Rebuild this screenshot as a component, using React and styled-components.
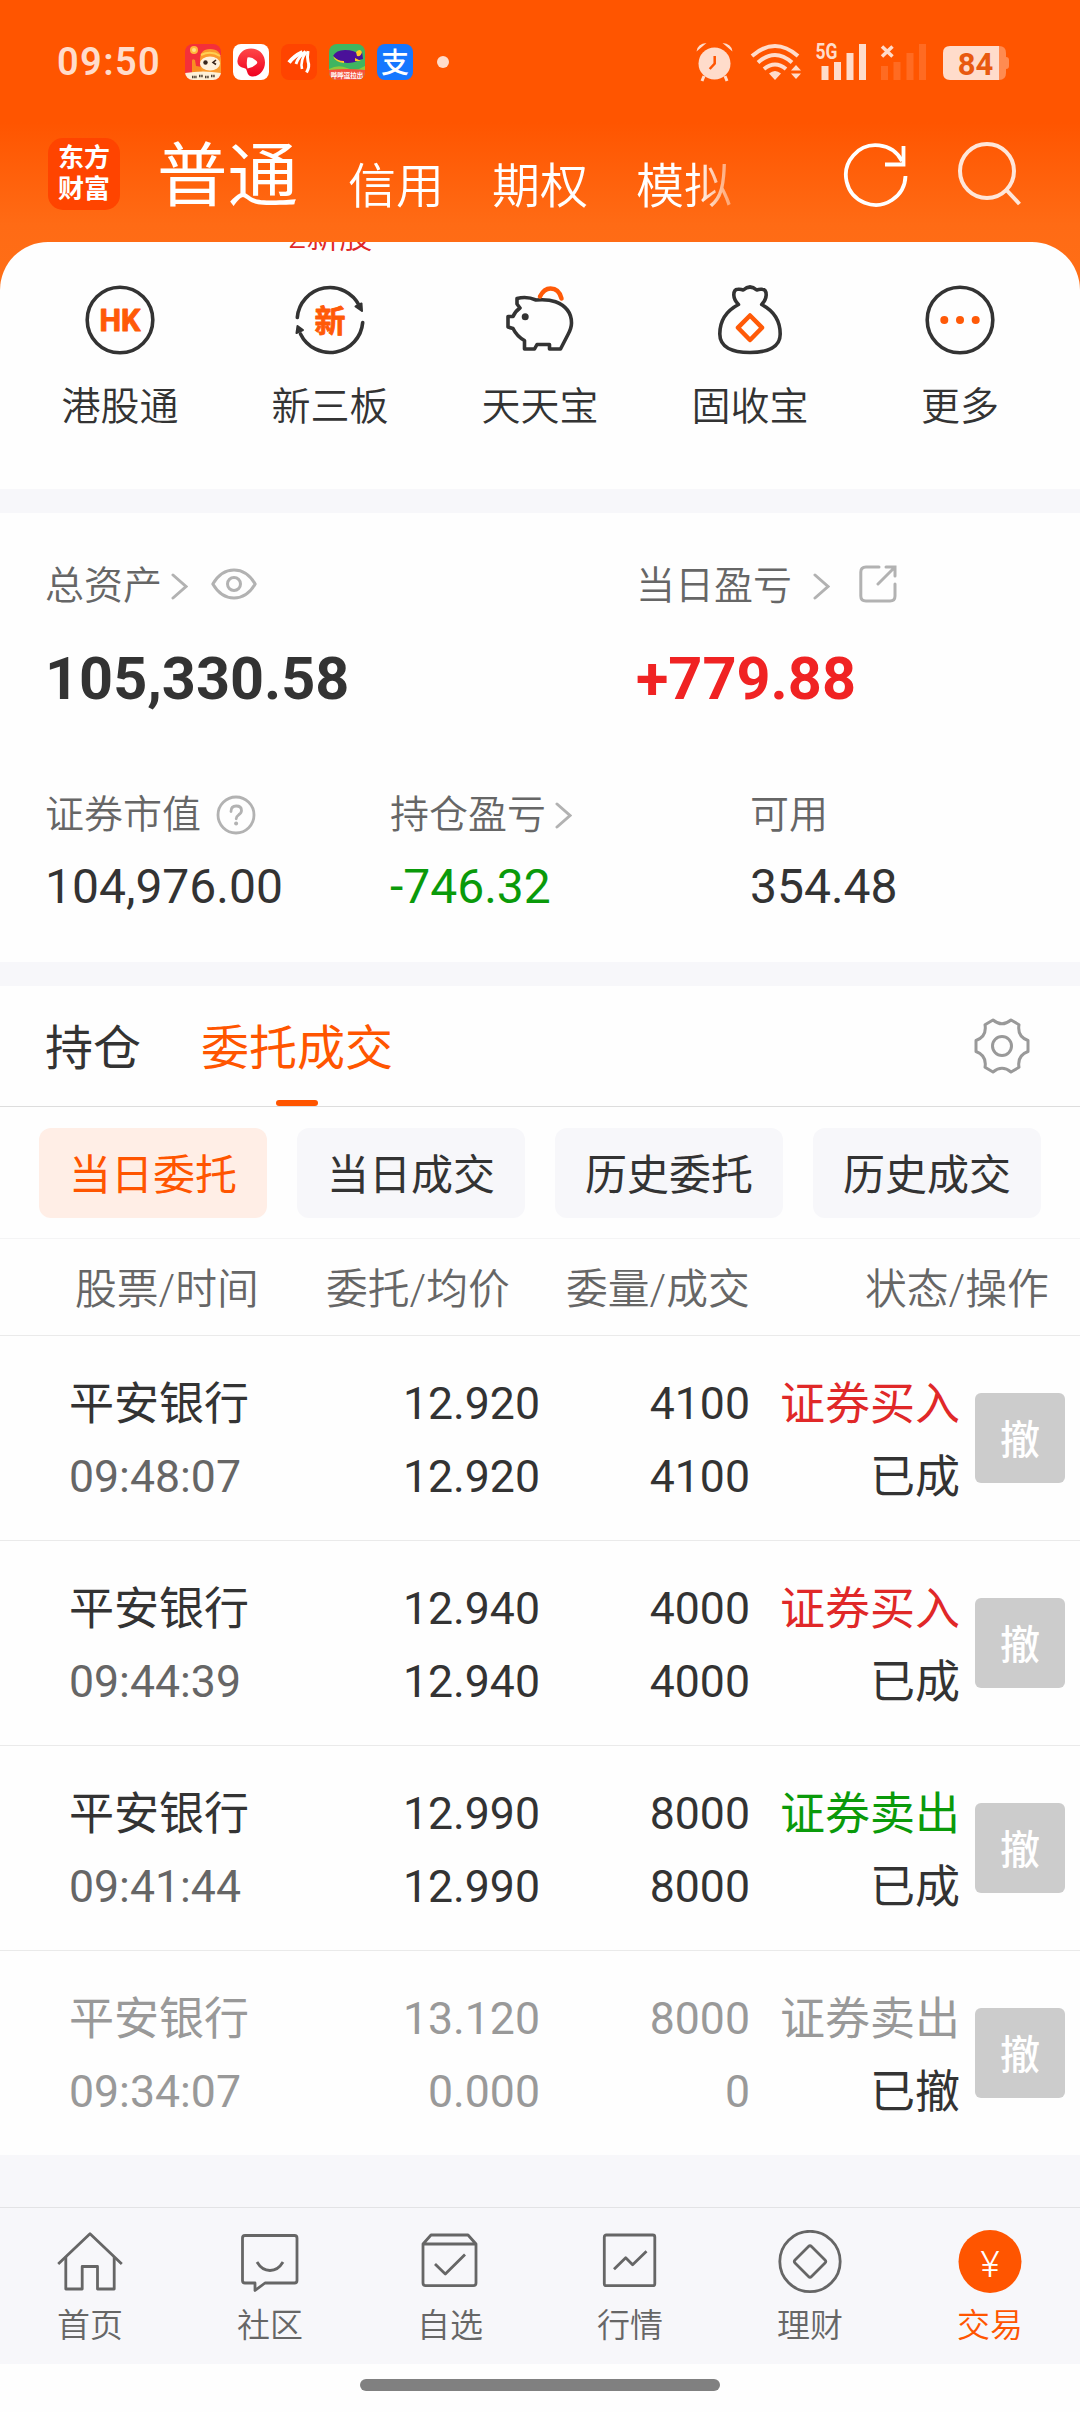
import React from 'react';
import styled, { createGlobalStyle } from 'styled-components';

const GlobalStyle = createGlobalStyle`
  * {
    box-sizing: border-box;
  }
  body {
    margin: 0;
    background: #fefefe;
    font-family: Roboto, 'Noto Sans CJK SC', sans-serif;
    color: #333;
  }
  svg {
    display: block;
    flex: none;
  }
`;

const Page = styled.div`
  width: 1080px;
  height: 2412px;
  overflow: hidden;
  display: flex;
  flex-direction: column;
`;

const Top = styled.div`
  background: linear-gradient(#ff5500 0, #ff5500 122px, #ff6b15 225px, #ff6f16 300px);
`;

const StatusBar = styled.div`
  height: 124px;
  display: flex;
  align-items: center;
  padding-left: 57px;
`;

const Clock = styled.div`
  width: 128px;
  font-size: 38px;
  font-weight: 600;
  letter-spacing: 1.4px;
  line-height: 40px;
  color: #ffdccb;
`;

const Notifications = styled.div`
  display: flex;
  gap: 12px;
`;

const MoreDot = styled.div`
  width: 12px;
  height: 12px;
  border-radius: 50%;
  background: #ffdccb;
  margin-left: 24px;
`;

const SystemIcons = styled.div`
  display: flex;
  align-items: center;
  margin-left: auto;
  margin-right: 69px;
`;

const Header = styled.div`
  height: 118px;
  display: flex;
  padding-left: 48px;
`;

const Logo = styled.div`
  width: 72px;
  height: 72px;
  margin-top: 14px;
  padding-top: 5px;
  border-radius: 15px;
  background: #ff4400;
  color: #fff;
  font-size: 26px;
  font-weight: 700;
  line-height: 31px;
  text-align: center;
`;

const AccountTabs = styled.div`
  display: flex;
  width: 640px;
  margin-left: 37px;
  color: #fff;
  white-space: nowrap;
  mask-image: linear-gradient(to right, #000 538px, transparent 598px);
`;

const AccountTab = styled.div`
  font-size: ${(p) => (p.$active ? '70.5px' : '48px')};
  line-height: 72px;
  margin-top: ${(p) => (p.$active ? '17px' : '27px')};
  margin-right: ${(p) => (p.$active ? '50px' : '48px')};
  font-weight: ${(p) => (p.$active ? 400 : 350)};
`;

const HeaderActions = styled.div`
  display: flex;
  gap: 48px;
  margin-top: 14px;
  margin-left: 46px;
`;

const Shortcuts = styled.div`
  height: 247px;
  display: flex;
  padding: 0 15px;
  background: #fefefe;
  border-radius: 48px 48px 0 0;
  overflow: hidden;
`;

const Shortcut = styled.div`
  position: relative;
  width: 210px;
  padding-top: 42px;
  display: flex;
  flex-direction: column;
  align-items: center;
  font-size: 39px;
  font-weight: 350;
  line-height: 60px;
  gap: 21px;
`;

const Badge = styled.div`
  position: absolute;
  top: -25px;
  font-size: 33px;
  line-height: 40px;
  color: #e02828;
  white-space: nowrap;
`;

const Gap = styled.div`
  height: 24px;
  background: #f7f7fa;
`;

const Assets = styled.div`
  height: 449px;
  padding: 43px 0 0 45px;
`;

const AssetGrid = styled.div`
  display: grid;
  grid-template-columns: ${(p) => p.$columns};
  row-gap: 12px;
  margin-bottom: 70px;
`;

const AssetLabel = styled.div`
  height: 60px;
  display: flex;
  align-items: center;
  font-size: 39px;
  font-weight: 350;
  line-height: 60px;
  color: #666;
  gap: ${(p) => p.$gap || 0}px;
`;

const IconSlot = styled.span`
  margin-left: ${(p) => p.$left}px;
  margin-bottom: 4px;
`;

const Total = styled.div`
  font-size: 59.4px;
  font-weight: 700;
  line-height: 72px;
  margin-top: 15px;
  color: ${(p) => p.$color || '#333'};
`;

const Amount = styled.div`
  font-size: 48px;
  line-height: 60px;
  color: ${(p) => p.$color || '#333'};
`;

const Tabs = styled.div`
  height: 121px;
  display: flex;
  gap: 60px;
  padding: 0 50px 0 45px;
  border-bottom: 1px solid #ddd;
  align-items: center;
`;

const Tab = styled.div`
  position: relative;
  height: 120px;
  font-size: 48px;
  line-height: 125px;
  color: ${(p) => (p.$active ? '#ff5500' : '#333')};
  &::after {
    content: '';
    display: ${(p) => (p.$active ? 'block' : 'none')};
    position: absolute;
    bottom: 0;
    left: calc(50% - 21px);
    width: 42px;
    height: 6px;
    border-radius: 3px;
    background: #ff5500;
  }
`;

const Spacer = styled.div`
  flex: 1;
`;

const Chips = styled.div`
  height: 132px;
  display: flex;
  gap: 30px;
  padding: 21px 39px 0;
  border-bottom: 1px solid #f4f4f5;
`;

const Chip = styled.div`
  width: 228px;
  height: 90px;
  border-radius: 12px;
  font-size: 42px;
  line-height: 96px;
  text-align: center;
  background: ${(p) => (p.$active ? '#ffeee6' : '#f7f7fa')};
  color: ${(p) => (p.$active ? '#ff5500' : '#333')};
`;

const HeadRow = styled.div`
  height: 97px;
  display: grid;
  grid-template-columns: 251px 240px 299px 185px;
  padding-left: 75px;
  border-bottom: 1px solid #eaeaea;
  font-size: 41.8px;
  font-weight: 350;
  line-height: 102px;
  color: #666;
  white-space: nowrap;
`;

const OrderRow = styled.div`
  height: 205px;
  display: grid;
  grid-template-columns: 231px 240px 210px 210px 90px;
  padding: 32px 0 0 69px;
  border-bottom: 1px solid #eaeaea;
  font-size: 44.6px;
  line-height: 73px;
  color: ${(p) => (p.$dim ? '#999' : '#333')};
  &:last-child {
    height: 204px;
    border-bottom: none;
  }
`;

const Cell = styled.div`
  text-align: ${(p) => (p.$left ? 'left' : 'right')};
`;

const Name = styled.div`
  height: 73px;
  line-height: 74px;
  font-size: 45px;
`;

const Time = styled.div`
  color: ${(p) => (p.$dim ? '#999' : '#666')};
`;

const Side = styled(Name)`
  color: ${(p) => p.$color};
`;

const Status = styled(Name)`
  color: #333;
`;

const CancelButton = styled.button`
  width: 90px;
  height: 90px;
  margin: 25px 0 0 15px;
  padding: 5px 0 0;
  border: none;
  border-radius: 6px;
  background: #ccc;
  color: #fff;
  font: 500 40px/85px Roboto, 'Noto Sans CJK SC', sans-serif;
`;

const Filler = styled.div`
  height: 52px;
  background: #f7f7fa;
`;

const TabBar = styled.div`
  height: 157px;
  display: flex;
  background: #f7f7fa;
  border-top: 1px solid #e3e3e5;
`;

const TabBarItem = styled.div`
  width: 180px;
  padding-top: 22px;
  display: flex;
  flex-direction: column;
  align-items: center;
  gap: 2px;
  font-size: 33px;
  font-weight: 350;
  line-height: 60px;
  color: ${(p) => (p.$active ? '#ff5500' : '#666')};
`;

const HomeIndicator = styled.div`
  width: 360px;
  height: 12px;
  margin: 15px auto 0;
  border-radius: 6px;
  background: #808080;
`;

const SvgText = styled.text`
  font-family: Roboto, 'Noto Sans CJK SC', sans-serif;
  font-weight: ${(p) => p.$weight || 700};
  text-anchor: middle;
`;

/* status bar */

const MonkeyApp = () => (
  <svg width="36" height="36" viewBox="0 0 36 36">
    <clipPath id="monkey"><rect width="36" height="36" rx="8" /></clipPath>
    <g clipPath="url(#monkey)">
      <rect width="36" height="36" fill="#f4303a" />
      <circle cx="9" cy="6" r="4" fill="#ffb83c" />
      <circle cx="9" cy="6" r="2" fill="#ffe08a" />
      <path d="M7 30V17q0-3 3-1l1 6 6 1v8z" fill="#f98e22" />
      <path d="M15 16q0-11 10-11 11 0 11 11v14H18q-3-6-3-14z" fill="#fb9a2c" />
      <path d="M16 11q10-5 19 1" fill="none" stroke="#ffcf52" strokeWidth="2" />
      <ellipse cx="25" cy="19.500" rx="10" ry="7" fill="#fff0dc" />
      <circle cx="20.500" cy="18.500" r="2.200" fill="#39251d" />
      <path d="M31 16l-3 2.500 3 2" fill="none" stroke="#39251d" strokeWidth="1.600" />
      <path d="M0 29q18-3 36 0v7H0z" fill="#fdf1d8" />
      <path d="M7 33h5M14 32h4M20 33h4M26 32h4" stroke="#4d4033" strokeWidth="2.500" strokeDasharray="1.500 .7" />
    </g>
  </svg>
);

const VideoApp = () => (
  <svg width="36" height="36" viewBox="0 0 36 36">
    <defs>
      <linearGradient id="video" x1="0" y1="0" x2="0" y2="1">
        <stop offset="0" stopColor="#ff4848" />
        <stop offset="1" stopColor="#ef0020" />
      </linearGradient>
    </defs>
    <rect width="36" height="36" rx="8" fill="#fff" />
    <path d="M18 4.500c8 0 14 6 14 14 0 8-6 14-12 14-3 0-5-1-6-5-1-4-2-3-5-4-3-1-5-4-4.500-7C5.500 9 11 4.500 18 4.500z" fill="url(#video)" />
    <path d="M14.500 13.500q4-1 9 3.500 1.500 1.500 0 3-4 4-9 4.500-1.500-5 0-11z" fill="#fff" />
  </svg>
);

const WingIcon = () => (
  <svg width="36" height="36" viewBox="0 0 36 36">
    <rect width="36" height="36" rx="8" fill="#ff4400" />
    <g fill="none" stroke="#fff" strokeLinejoin="round">
      <path d="M8 18.500Q13 12 21.500 8" strokeWidth="4" />
      <path d="M15 20q2-7 9.500-12.500" strokeWidth="2.800" />
      <path d="M21 25q-2-9 4.500-17" strokeWidth="2.600" />
      <path d="M25.500 28.500q3.500-6 1.500-11-1-4 0-10.500" strokeWidth="3" />
    </g>
  </svg>
);

const FishApp = () => (
  <svg width="36" height="36" viewBox="0 0 36 36">
    <clipPath id="fish"><rect width="36" height="36" rx="8" /></clipPath>
    <g clipPath="url(#fish)">
      <rect width="36" height="36" fill="#3fb560" />
      <path d="M0 25q9-5 18-1t18-2v14H0z" fill="#8fc93c" />
      <path d="M4 12q3-6 12-6 10 0 14 5l3-4 1 8-4 1q-4 3-12 3-8-1-14-7z" fill="#4a1199" />
      <path d="M4 12q4 5 11 5v2Q6 18 4 12z" fill="#ffc928" />
      <path d="M27 8q4-4 6 0-1 5-5 4zM26 14l6 3-6 0z" fill="#ffc928" />
      <path d="M0 26q18-2 36 0v10H0z" fill="#f4523d" />
      <SvgText x="18" y="33.500" fontSize="6.500" fill="#fff">哔哔逗拉出</SvgText>
    </g>
  </svg>
);

const PayApp = () => (
  <svg width="36" height="36" viewBox="0 0 36 36">
    <rect width="36" height="36" rx="8" fill="#1677ff" />
    <SvgText x="18" y="28.500" fontSize="28" fill="#fff" $weight={500}>支</SvgText>
  </svg>
);

const StatusGlyphs = () => (
  <svg width="315" height="60" viewBox="696 32 315 60" fill="#ffdccb">
    {/* alarm */}
    <circle cx="714.500" cy="63.500" r="16" />
    <path d="M696.500 51.500q1-8 10-8.500zM732.500 51.500q-1-8-10-8.500z" />
    <path d="M704 76l-2 5M725 76l2 5" stroke="#ffdccb" strokeWidth="3" />
    <path d="M714.700 56v7.500l-5 5.500" fill="none" stroke="#ff5500" strokeWidth="2.500" />
    {/* wifi */}
    <g fill="none" stroke="#ffdccb" strokeWidth="4">
      <path d="M752 56q23-20 46 0" />
      <path d="M758 62.500q17-15 34 0" />
      <path d="M764 69q11-9 22 0" />
    </g>
    <path d="M775 80l-6-6.500q6-5 12 0zM796 65l5 5.500h-10zM796 79l5-5.500h-10z" />
    {/* sim 1 */}
    <SvgText x="826.500" y="59" fontSize="22" textLength="22" lengthAdjust="spacingAndGlyphs">5G</SvgText>
    <path d="M821.500 66h7v14h-7zM834 62h7v18h-7zM846.500 53h7v27h-7zM859 44h7v36h-7z" />
    {/* sim 2 */}
    <path d="M882 46.500l10.500 10M892.500 46.500l-10.500 10" stroke="#ffdccb" strokeWidth="3.500" />
    <path d="M881 66h7v14h-7zM893.500 62h7v18h-7zM906.500 53h7v27h-7zM919 44h7v36h-7z" opacity=".17" />
    {/* battery */}
    <path d="M999 46q7 0 7 7v4q3 0 3 3v6q0 3-3 3v4q0 7-7 7z" opacity=".4" />
    <path d="M950 46h49v34h-49q-7 0-7-7V53q0-7 7-7z" />
    <SvgText x="975.500" y="74.500" fontSize="31" fill="#e8590f">84</SvgText>
  </svg>
);

const RefreshIcon = () => (
  <svg width="66" height="72" viewBox="843 138 66 72" fill="none" stroke="#fff" strokeWidth="3.800">
    <path d="M905.500 176a29.800 29.800 0 1 1-3.500-15" />
    <path d="M903.500 146v18.500h-18.500" />
  </svg>
);

const SearchIcon = () => (
  <svg width="66" height="72" viewBox="957 138 66 72" fill="none" stroke="#ffe6d9" strokeWidth="4">
    <circle cx="987" cy="171" r="27" />
    <path d="M1005.500 189l14 15" />
  </svg>
);

/* shortcuts */

const ShortcutSvg = ({ children }) => (
  <svg width="72" height="72" viewBox="0 0 72 72" fill="none" stroke="#333" strokeWidth="3.600" strokeLinecap="round" strokeLinejoin="round">
    {children}
  </svg>
);

const HkIcon = () => (
  <ShortcutSvg>
    <circle cx="36" cy="36" r="32.800" />
    <SvgText x="36" y="46.500" fontSize="30.500" fill="#ff5a08" stroke="#ff5a08" strokeWidth="1">HK</SvgText>
  </ShortcutSvg>
);

const NewBoardIcon = () => (
  <ShortcutSvg>
    <path d="M3.300 33.500A32.800 32.800 0 0 1 65.500 22" />
    <path d="M68.700 38.500A32.800 32.800 0 0 1 6.500 50" />
    <path d="M61.500 22.500l6-3 .5 7.500zM3.500 42l5.500 4-6.500 3z" fill="#333" strokeWidth="2" />
    <SvgText x="36" y="47.500" fontSize="31" fill="#ff5a08" stroke="#ff5a08" strokeWidth=".8">新</SvgText>
  </ShortcutSvg>
);

const PiggyIcon = () => (
  <ShortcutSvg>
    <path d="M13 14.500q10-2.500 19 1.500 12-1 19.500 1.800Q67.500 24 67.500 39q0 5-3.500 11.500L56.500 65H45.500v-4.500H33L30.500 65H20.500v-8.500Q13 52.500 9 44.500L4 43V32.500h5q2-5 7-8.500l-3-4z" />
    <circle cx="21.200" cy="32.700" r="3.500" fill="#333" stroke="none" />
    <path d="M36 12.500Q40 4.500 46.500 4.500q8.500 0 11 10" stroke="#ff5a08" strokeWidth="4.500" />
  </ShortcutSvg>
);

const BagIcon = () => (
  <ShortcutSvg>
    <path d="M24.500 20.500Q20 16 19.800 11q0-5.500 4-5.700 3-.3 5.500.7Q36 0 42.700 6q2.500-1 5.500-.7 4 .2 4 5.700-.2 5-4.500 9.500C60 27 66.200 37 66.200 50 66.200 63 54 68.500 36 68.500S5.800 63 5.800 50C5.800 37 12 27 24.500 20.500z" />
    <path d="M36 31.500L48 43.700 36 56 24 43.700z" stroke="#ff5a08" strokeWidth="4.500" />
  </ShortcutSvg>
);

const MoreIcon = () => (
  <ShortcutSvg>
    <circle cx="36" cy="36" r="32.800" />
    <g fill="#ff5a08" stroke="none">
      <circle cx="20.300" cy="36" r="4" />
      <circle cx="36" cy="36" r="4" />
      <circle cx="51.700" cy="36" r="4" />
    </g>
  </ShortcutSvg>
);

/* assets */

const ChevronIcon = () => (
  <svg width="17" height="28" viewBox="0 0 17 28" fill="none" stroke="#b2b2b2" strokeWidth="3" strokeLinecap="round">
    <path d="M2 3l13 11.500L2 26" />
  </svg>
);

const EyeIcon = () => (
  <svg width="46" height="32" viewBox="0 0 46 32" fill="none" stroke="#b2b2b2" strokeWidth="3">
    <path d="M1.800 16Q10 2 23 2t21.200 14Q36 30 23 30T1.800 16z" strokeLinejoin="round" />
    <circle cx="23" cy="16" r="6.500" />
  </svg>
);

const ShareIcon = () => (
  <svg width="38" height="38" viewBox="0 0 38 38" fill="none" stroke="#b2b2b2" strokeWidth="3" strokeLinecap="round">
    <path d="M20 2H7Q1.800 2 1.800 7v24q0 5 5.200 5h24q5 0 5-5V19" />
    <path d="M27 2h9v9M36 2L19 19" />
  </svg>
);

const HelpIcon = () => (
  <svg width="40" height="40" viewBox="0 0 40 40" fill="none" stroke="#b2b2b2" strokeWidth="2.800">
    <circle cx="20" cy="20" r="18" />
    <path d="M15 16.500q0-5.500 5.200-5.500 5.300 0 5.300 4.500 0 2.500-2.800 4.300-2.500 1.700-2.500 4" strokeLinecap="round" />
    <circle cx="20.100" cy="28.500" r="2" fill="#b2b2b2" stroke="none" />
  </svg>
);

const GearIcon = () => (
  <svg width="56" height="56" viewBox="-28 -28 56 56" fill="none" stroke="#999" strokeWidth="3" strokeLinejoin="round">
    <path d="M-9-26Q0-18.500 9-26l8 4.700Q15-9.500 26-5.500V5.500Q15 9.500 17 21.300L9 26Q0 18.500-9 26l-8-4.700Q-15 9.500-26 5.500V-5.500Q-15-9.500-17-21.300z" />
    <circle r="9.500" />
  </svg>
);

/* tab bar */

const TabSvg = ({ children }) => (
  <svg width="72" height="64" viewBox="0 0 72 64" fill="none" stroke="#666" strokeWidth="2.800" strokeLinejoin="round">
    {children}
  </svg>
);

const HomeIcon = () => (
  <TabSvg>
    <path d="M4.200 34L36 3.800 67.800 34" />
    <path d="M11.800 27v32H28.200V36.500H43.500V59H60.200V27" />
  </TabSvg>
);

const CommunityIcon = () => (
  <TabSvg>
    <path d="M11 5.500H60.500q2.500 0 2.500 2.500V50.500q0 2.500-2.500 2.500H31L21 60.500V53H11q-2.500 0-2.500-2.500V8q0-2.500 2.500-2.500z" />
    <path d="M23 32q5 8.500 13 8.500T49 32" />
  </TabSvg>
);

const WatchlistIcon = () => (
  <TabSvg>
    <path d="M9 14L17 5H54L62 14V53q0 2.700-2.700 2.700H11.700Q9 55.700 9 53zM9 14H62" />
    <path d="M21 34L31.300 44 51 24.500" />
  </TabSvg>
);

const MarketIcon = () => (
  <TabSvg>
    <rect x="10.300" y="5" width="50.500" height="50.700" rx="2" />
    <path d="M20 39.300L31.700 27.800 38.600 34.700 52.500 21.300" />
  </TabSvg>
);

const WealthIcon = () => (
  <TabSvg>
    <circle cx="36" cy="31.500" r="30.200" />
    <path d="M34.500 16.500q1.500-1.500 3 0L51 30q1.500 1.500 0 3L37.500 46.500q-1.500 1.500-3 0L21 33q-1.500-1.500 0-3z" />
  </TabSvg>
);

const TradeIcon = () => (
  <TabSvg>
    <circle cx="36" cy="31.500" r="31.500" fill="#ff5500" stroke="none" />
    <SvgText x="36" y="47" fontSize="37" fill="#fff" stroke="none" $weight={350}>¥</SvgText>
  </TabSvg>
);

const shortcuts = [
  { label: '港股通', icon: <HkIcon /> },
  { label: '新三板', icon: <NewBoardIcon />, badge: '2新股' },
  { label: '天天宝', icon: <PiggyIcon /> },
  { label: '固收宝', icon: <BagIcon /> },
  { label: '更多', icon: <MoreIcon /> },
];

const orders = [
  { time: '09:48:07', price: '12.920', avg: '12.920', qty: '4100', done: '4100', side: '证券买入', color: '#e02828', status: '已成' },
  { time: '09:44:39', price: '12.940', avg: '12.940', qty: '4000', done: '4000', side: '证券买入', color: '#e02828', status: '已成' },
  { time: '09:41:44', price: '12.990', avg: '12.990', qty: '8000', done: '8000', side: '证券卖出', color: '#0a9a0a', status: '已成' },
  { time: '09:34:07', price: '13.120', avg: '0.000', qty: '8000', done: '0', side: '证券卖出', color: '#999', status: '已撤', dim: true },
];

const tabBar = [
  { label: '首页', icon: <HomeIcon /> },
  { label: '社区', icon: <CommunityIcon /> },
  { label: '自选', icon: <WatchlistIcon /> },
  { label: '行情', icon: <MarketIcon /> },
  { label: '理财', icon: <WealthIcon /> },
  { label: '交易', icon: <TradeIcon />, active: true },
];

const App = () => {
  return (
    <Page>
      <GlobalStyle />
      <Top>
        <StatusBar>
          <Clock>09:50</Clock>
          <Notifications>
            <MonkeyApp />
            <VideoApp />
            <WingIcon />
            <FishApp />
            <PayApp />
          </Notifications>
          <MoreDot />
          <SystemIcons>
            <StatusGlyphs />
          </SystemIcons>
        </StatusBar>
        <Header>
          <Logo>
            东方
            <br />
            财富
          </Logo>
          <AccountTabs>
            <AccountTab $active>普通</AccountTab>
            <AccountTab>信用</AccountTab>
            <AccountTab>期权</AccountTab>
            <AccountTab>模拟</AccountTab>
          </AccountTabs>
          <HeaderActions>
            <RefreshIcon />
            <SearchIcon />
          </HeaderActions>
        </Header>
        <Shortcuts>
          {shortcuts.map((s) => (
            <Shortcut key={s.label}>
              {s.badge && <Badge>{s.badge}</Badge>}
              {s.icon}
              <span>{s.label}</span>
            </Shortcut>
          ))}
        </Shortcuts>
      </Top>
      <Gap />
      <Assets>
        <AssetGrid $columns="591px 1fr">
          <AssetLabel $gap={9}>
            总资产
            <ChevronIcon />
            <IconSlot $left={14}>
              <EyeIcon />
            </IconSlot>
          </AssetLabel>
          <AssetLabel $gap={21}>
            当日盈亏
            <ChevronIcon />
            <IconSlot $left={8}>
              <ShareIcon />
            </IconSlot>
          </AssetLabel>
          <Total>105,330.58</Total>
          <Total $color="#f02323">+779.88</Total>
        </AssetGrid>
        <AssetGrid $columns="345px 360px 1fr">
          <AssetLabel $gap={15}>
            证券市值
            <HelpIcon />
          </AssetLabel>
          <AssetLabel $gap={9}>
            持仓盈亏
            <ChevronIcon />
          </AssetLabel>
          <AssetLabel>可用</AssetLabel>
          <Amount>104,976.00</Amount>
          <Amount $color="#0a9a0a">-746.32</Amount>
          <Amount>354.48</Amount>
        </AssetGrid>
      </Assets>
      <Gap />
      <Tabs>
        <Tab>持仓</Tab>
        <Tab $active>委托成交</Tab>
        <Spacer />
        <GearIcon />
      </Tabs>
      <Chips>
        <Chip $active>当日委托</Chip>
        <Chip>当日成交</Chip>
        <Chip>历史委托</Chip>
        <Chip>历史成交</Chip>
      </Chips>
      <HeadRow>
        <span>股票/时间</span>
        <span>委托/均价</span>
        <span>委量/成交</span>
        <span>状态/操作</span>
      </HeadRow>
      <div>
        {orders.map((o) => (
          <OrderRow key={o.time} $dim={o.dim}>
            <Cell $left>
              <Name>平安银行</Name>
              <Time $dim={o.dim}>{o.time}</Time>
            </Cell>
            <Cell>
              <div>{o.price}</div>
              <div>{o.avg}</div>
            </Cell>
            <Cell>
              <div>{o.qty}</div>
              <div>{o.done}</div>
            </Cell>
            <Cell>
              <Side $color={o.color}>{o.side}</Side>
              <Status>{o.status}</Status>
            </Cell>
            <CancelButton>撤</CancelButton>
          </OrderRow>
        ))}
      </div>
      <Filler />
      <TabBar>
        {tabBar.map((t) => (
          <TabBarItem key={t.label} $active={t.active}>
            {t.icon}
            <span>{t.label}</span>
          </TabBarItem>
        ))}
      </TabBar>
      <HomeIndicator />
    </Page>
  );
};

export default App;
